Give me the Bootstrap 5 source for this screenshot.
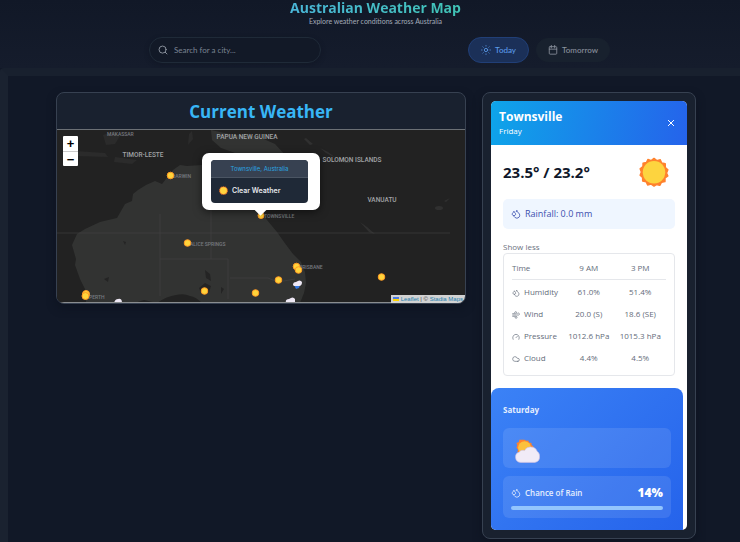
<!DOCTYPE html>
<html lang="en">
<head>
<meta charset="utf-8">
<meta name="viewport" content="width=device-width, initial-scale=1">
<title>Australian Weather Map</title>
<link href="https://cdn.jsdelivr.net/npm/bootstrap@5.3.0/dist/css/bootstrap.min.css" rel="stylesheet">
<style>
body{background:#111827;font-family:"Open Sans","Noto Sans",sans-serif;font-size:8px;line-height:12px;color:#111827;min-height:100vh}
h1,h2,h3,p{margin:0}
.site-head{height:68px;background:linear-gradient(#111827,#151c2c)}
.head-text{padding-left:11px}
.site-title{font-size:14px;line-height:16px;font-weight:700;background:linear-gradient(90deg,#4ab6d8,#40c3b5);-webkit-background-clip:text;background-clip:text;color:transparent}
.site-sub{font-family:Lato,sans-serif;font-size:7px;line-height:10px;color:#a3abb8}
.tools{margin-top:11px;padding-left:149px;padding-right:130px}
.search-box{flex:0 1 172px;height:26px;border:1px solid #1f2a38;border-radius:13px;padding:0 8px;color:#9ca3af;background:#121927;box-shadow:0 2px 5px #0c121f66}
.search-box input{background:none;border:0;outline:0;min-width:0;font:8px Lato,sans-serif;color:#9ca3af;padding:0 0 0 6px}
.search-box input::placeholder{color:#7b8493}
.day-gap{gap:7px}
.day-btn{height:24px;border-radius:13px;border:1px solid #18212e;background:#18212e;color:#8b929e;font:500 8px Lato,sans-serif;padding:0 11px}
.day-btn.active-day{height:26px;background:#1b3058;border-color:#213f77;color:#5c9bea;padding:0 12px}
.ico{fill:none;stroke:currentColor;stroke-width:2;stroke-linecap:round;stroke-linejoin:round;flex:none;width:10px;height:10px}
.frame{border-top:8px solid #18202e;border-left:8px solid #1a2230;border-top-left-radius:4px;background:#111827;padding:16px 44px 3px 48px}
.panels{display:grid;grid-template-columns:410fr 214fr;gap:16px}
.panel{background:#19212f;border:1px solid #374151;border-radius:8px;box-shadow:0 4px 8px #0b101c99}
.map-title{font-size:17px;line-height:34px;padding-top:2px;font-weight:700;color:#38b6f6;border-bottom:1px solid #6b7075}
.map-view{background:#222;border-radius:0 0 7px 7px;overflow:hidden}
.map-view>svg{display:block;width:100%}
.map-svg text{font-family:Roboto,"Open Sans",sans-serif;font-weight:500}
.zoom-ctl{top:6px;left:6px;width:15px;border-radius:1px;overflow:hidden}
.zoom-ctl button{display:block;width:100%;height:15px;border:0;padding:0;background:#fff;color:#000;font:700 13px/15px "Liberation Sans",sans-serif}
.zoom-ctl button+button{border-top:1px solid #ccc}
.popup{left:145px;top:23px;width:118px;height:57px;background:#fff;border-radius:7px;padding:7px 12px 7px 9px;box-shadow:0 2px 8px #0008}
.popup::after{content:"";position:absolute;left:54px;top:52px;width:9px;height:9px;background:#fff;transform:rotate(45deg)}
.popup-in{position:relative;z-index:1;border-radius:4px;overflow:hidden;background:#1f2937;font-family:Inter,sans-serif}
.popup-city{background:#374151;color:#2ba6e2;font-size:6px;line-height:17px;border-bottom:1px solid #4b5563}
.popup-state{font-size:7px;line-height:25px;font-weight:600;color:#e5e7eb;padding-left:8px}
.map-attr{right:0;bottom:0;background:#d2d2d2;font:6px/8px "Liberation Sans",sans-serif;color:#444;padding:0 2px}
.map-attr a{color:#1f7fae;text-decoration:none}
.side{padding:8px}
.side-in{background:#fff;border-radius:5px;overflow:hidden}
.city-head{background:linear-gradient(100deg,#0ea5e9,#2563eb);color:#fff;height:44px;padding:0 8px}
.city-name{font-size:12px;line-height:16px;font-weight:700}
.close-x{background:none;border:0;color:#fff;padding:0 4px 0 0;line-height:0}
.close-x .ico{width:8px;height:8px;stroke-width:3}
.temps{font-size:15px;line-height:20px;font-weight:700;color:#0f172a}
.sun-big{margin-right:6px}
.rain-box{background:#eff6ff;color:#3b4fae;border-radius:5px;height:30px;font-size:9px;padding:0 8px}
.more-btn{background:none;border:0;padding:0;color:#6b7280;font-size:8px;line-height:12px;margin-top:12px}
.obs-box{border:1px solid #e5e7eb;border-radius:4px;padding:3px 8px 6px;margin-bottom:12px}
.obs{width:100%;table-layout:fixed;color:#646c7a;font-size:8px;line-height:12px;font-weight:500}
.obs th,.obs td{height:22px;padding:0;text-align:center;font-weight:500;white-space:nowrap}
.obs tr>:first-child{text-align:left;width:51px}
.obs thead th{border-bottom:1px solid #e5e7eb}
.obs tbody tr:first-child>*{height:24px;padding-top:2px}
.obs .ico{width:8px;height:8px}
.next-day{background:linear-gradient(135deg,#3b82f6,#2563eb);border-radius:8px 8px 0 0;margin-right:4px;padding:16px 12px 12px;color:#e5eefe}
.day-name{font-size:8px;line-height:12px;font-weight:700}
.glass{background:#ffffff1a;border-radius:6px}
.sky-box{height:40px;padding:10px 11px;margin:12px 0 8px}
.rain-row{line-height:18px;font-weight:600;padding-bottom:4px}
.rain-row strong{font-size:12px;color:#fff}
.meter{height:4px;border-radius:2px;background:#93c5fd}
</style>
</head>
<body class="d-flex flex-column">
<svg width="0" height="0" class="position-absolute">
<defs>
<symbol id="drops" viewBox="0 0 24 24"><path d="M7 16.3c2.2 0 4-1.83 4-4.05 0-1.16-.57-2.26-1.71-3.19S7.29 6.75 7 5.3c-.29 1.45-1.14 2.84-2.29 3.76S3 11.1 3 12.25c0 2.22 1.8 4.05 4 4.05z"/><path d="M12.56 6.6A10.97 10.97 0 0 0 14 3.02c.5 2.5 2 4.9 4 6.5s3 3.5 3 5.5a6.98 6.98 0 0 1-11.91 4.97"/></symbol>
<symbol id="sunny" viewBox="0 0 32 32"><path fill="#ff822d" stroke="#ff822d" stroke-width="1.500" stroke-linejoin="round" d="M16 1.500l3 2.400 3.700-1 1.500 3.500 3.800.8.1 3.900 2.700 2.400-1.400 3.500 1.400 3.200-3 2.200-.1 3.900-3.800.8-1.700 3.200-3.700-.9L16 31l-3-2-3.800.9-1.600-3.500-3.700-.8-.1-3.800L1.200 19.500l1.300-3.500-1.300-3.500 3-2.400L4.300 6.500l3.700-.8L9.600 2.600l3.500 1.200z"/><circle cx="16" cy="16.300" r="12" fill="#fdd43f"/></symbol>
<symbol id="cloudsun" viewBox="0 0 32 32"><path fill="#ff822d" d="M13 2l2 1.500L17.500 3l1 2.500 3 .5.200 2.700 2.300 1.800-1 3 .5 4H4l1-3-2-2.500 1-3-1-3 3-1 .500-3 3 .3z"/><circle cx="13" cy="12" r="8" fill="#fcc13c"/><path d="M8 30a6.500 6.500 0 0 1-1.500-12.700c1.500-2 4-2.800 6.500-1.800A7.500 7.500 0 0 1 20 11c4.500-.3 7.500 2 8.500 5.500C31 18 31.500 20.500 31.500 23a7 7 0 0 1-6 7z" fill="#f1ebf7" stroke="#cdbfe0" stroke-width=".8"/></symbol>
</defs></svg>

<header class="site-head text-center">
  <div class="head-text">
    <h1 class="site-title d-table mx-auto">Australian Weather Map</h1>
    <p class="site-sub">Explore weather conditions across Australia</p>
  </div>
  <div class="tools d-flex justify-content-between align-items-center">
    <div class="search-box d-flex align-items-center">
      <svg class="ico" viewBox="0 0 24 24"><circle cx="11" cy="11" r="8.500"/><path d="M21.500 21.500l-4-4"/></svg>
      <input type="text" class="flex-grow-1" aria-label="Search for a city" placeholder="Search for a city...">
    </div>
    <div class="day-gap d-flex align-items-center">
      <button type="button" class="day-btn active-day d-flex align-items-center gap-1"><svg class="ico" viewBox="0 0 24 24"><circle cx="12" cy="12" r="4"/><path d="M12 1.500v1M12 21.500v1M4.600 4.600l.7.7M18.700 18.700l.7.7M1.500 12h1M21.500 12h1M5.300 18.700l-.7.7M19.400 4.600l-.7.7"/></svg>Today</button>
      <button type="button" class="day-btn d-flex align-items-center gap-1"><svg class="ico" viewBox="0 0 24 24"><rect x="3" y="4" width="18" height="18" rx="2"/><path d="M16 1v6M8 1v6M3 10h18"/></svg>Tomorrow</button>
    </div>
  </div>
</header>

<main class="frame flex-grow-1">
<div class="panels align-items-start">
  <section class="panel">
    <h2 class="map-title text-center">Current Weather</h2>
    <div class="map-view position-relative">
      <svg class="map-svg" viewBox="57 130 408 173">
        <path d="M57 130H465V303H57z" fill="#222"/>
        <g fill="#323332">
          <path d="M86 302l-1-13-5-10-5-14 1-6-4-14 5-11 8-5 15-7 17-4 8-14 7-3 1-7 5-4 8-5 9-4 7 3 4-5 7-9 7-5 7 1 15-1 7 3-4 8-3 7 9 8 9 3 8-3 4-10 2-18 3-5 5 9 4 12 6 12 7 17 8 12 10 12 7 10 9 12 8 8 4 10 1 11-2 10-4 10H157l-13-3-13 4z"/>
          <path d="M211 130l18 4 28 2 18 8 13 14-18-2-15-2-20-1-14-5-9-8z"/>
          <path d="M103 135l11-4 6 5-5 8-9 1zM115 157l22 3-5 4-18-2zM75 151l30 2 3 4-32-1zM189 134l3-3 1 8-5 6z" fill="#2b2b2b"/>
          <path d="M306 138l7 6-3 1-6-6zM320 148l8 4 8 6-10-5zM342 158l9 5-6 0zM360 222l7 5 8 7-6-2zM435 208a4 2 0 1 0 8 0a4 2 0 1 0-8 0M444 201l6-3-4 4z" fill="#303030"/>
        </g>
        <path d="M160 214v82M211 170v89M160 259h68v40M230 278h38l10 4 17-3M57 233H450" fill="none" stroke="#444" stroke-width=".6"/>
        <path d="M157 303q10-7 19-8 8-2 14 1 6 1 12 7z" fill="#222"/>
        <g fill="#242424"><path d="M205 270l5 4 1 7-5-3zM199 288l6-5 6 3-2 6-8 1zM221 287l3 2-3 5zM104 279l5-2-1 5zM123 241l3 1-1 3z"/></g>
        <g fill="#a1a3a6" font-size="6.500" text-anchor="middle">
          <text x="247" y="139">PAPUA NEW GUINEA</text><text x="143" y="157">TIMOR-LESTE</text><text x="352" y="162">SOLOMON ISLANDS</text><text x="382" y="202">VANUATU</text>
        </g>
        <g fill="#777a80" font-size="5"><text x="107" y="136">MAKASSAR</text><text x="172" y="178">DARWIN</text><text x="190" y="246">ALICE SPRINGS</text><text x="264" y="218">TOWNSVILLE</text><text x="299" y="269">BRISBANE</text><text x="89" y="299">PERTH</text></g>
        <g fill="#ffd43b" stroke="#ff9a25" stroke-width="1"><circle cx="170.500" cy="175.500" r="3.300"/><circle cx="187.500" cy="243" r="3.300"/><circle cx="261" cy="215.500" r="3"/><circle cx="296.500" cy="266.500" r="3.300"/><circle cx="298.500" cy="270" r="3.300"/><circle cx="278.500" cy="280" r="3.300"/><circle cx="255.500" cy="293" r="3.300"/><circle cx="204.500" cy="291" r="3.300"/><circle cx="381.500" cy="277" r="3.300"/><circle cx="86" cy="294" r="3.500"/><circle cx="85.500" cy="296" r="3.500"/></g>
        <path d="M294 285h6l-1 3-3 1z" fill="#3477df"/>
        <path d="M293 285q0-3 3-3 4-3 6 0 0 4-3 4h-5zM286 303q-1-4 3-4 4-3 6 0v4zM114 303q1-4 4-4 4-1 4 4z" fill="#eee8f5"/>
        <path d="M57 302.500H465" stroke="#8a8d90" stroke-width="1"/>
      </svg>
      <div class="zoom-ctl position-absolute"><button type="button" aria-label="Zoom in">+</button><button type="button" aria-label="Zoom out">−</button></div>
      <div class="popup position-absolute">
        <div class="popup-in">
          <div class="popup-city text-center">Townsville, Australia</div>
          <div class="popup-state d-flex align-items-center"><svg width="9" height="9" class="me-1"><use href="#sunny"/></svg>Clear Weather</div>
        </div>
      </div>
      <div class="map-attr position-absolute"><svg width="6" height="4" viewBox="0 0 6 4"><path fill="#4c7be1" d="M0 0h6v2H0z"/><path fill="#ffd500" d="M0 2h6v2H0z"/></svg> <a href="#">Leaflet</a> | © <a href="#">Stadia Maps</a></div>
    </div>
  </section>

  <aside class="panel side">
    <div class="side-in">
      <div class="city-head d-flex align-items-center justify-content-between">
        <div><h2 class="city-name">Townsville</h2><p>Friday</p></div>
        <button type="button" class="close-x" aria-label="Close"><svg class="ico" viewBox="0 0 24 24"><path d="M4 4l16 16M20 4L4 20"/></svg></button>
      </div>
      <div class="px-2 mx-1">
        <div class="d-flex align-items-center justify-content-between py-2 my-1">
          <div class="temps">23.5° / 23.2°</div>
          <svg width="30" height="30" class="sun-big"><use href="#sunny"/></svg>
        </div>
        <div class="rain-box d-flex align-items-center gap-1"><svg class="ico"><use href="#drops"/></svg>Rainfall: 0.0 mm</div>
        <button type="button" class="more-btn d-block">Show less</button>
        <div class="obs-box">
          <table class="obs">
            <thead><tr><th scope="col">Time</th><th scope="col">9 AM</th><th scope="col">3 PM</th></tr></thead>
            <tbody>
              <tr><th scope="row"><svg class="ico me-1"><use href="#drops"/></svg>Humidity</th><td>61.0%</td><td>51.4%</td></tr>
              <tr><th scope="row"><svg class="ico me-1" viewBox="0 0 24 24"><path d="M2 8h9a3 3 0 1 0-3-3M2 12h18a3 3 0 1 0-3-5M2 16h10a3 3 0 1 1-3 3"/></svg>Wind</th><td>20.0 (S)</td><td>18.6 (SE)</td></tr>
              <tr><th scope="row"><svg class="ico me-1" viewBox="0 0 24 24"><path d="M12 14l4-4M3.300 19a10 10 0 1 1 17.400 0"/></svg>Pressure</th><td>1012.6 hPa</td><td>1015.3 hPa</td></tr>
              <tr><th scope="row"><svg class="ico me-1" viewBox="0 0 24 24"><path d="M17.500 19H9a7 7 0 1 1 6.700-9h1.800a4.500 4.500 0 1 1 0 9z"/></svg>Cloud</th><td>4.4%</td><td>4.5%</td></tr>
            </tbody>
          </table>
        </div>
      </div>
      <section class="next-day">
        <h3 class="day-name">Saturday</h3>
        <div class="glass sky-box"><svg width="26" height="26"><use href="#cloudsun"/></svg></div>
        <div class="glass p-2">
          <div class="rain-row d-flex align-items-center gap-1"><svg class="ico"><use href="#drops"/></svg><span>Chance of Rain</span><strong class="ms-auto">14%</strong></div>
          <div class="meter"></div>
        </div>
      </section>
    </div>
  </aside>
</div>
</main>
<script src="https://cdn.jsdelivr.net/npm/bootstrap@5.3.0/dist/js/bootstrap.bundle.min.js"></script>
</body>
</html>
